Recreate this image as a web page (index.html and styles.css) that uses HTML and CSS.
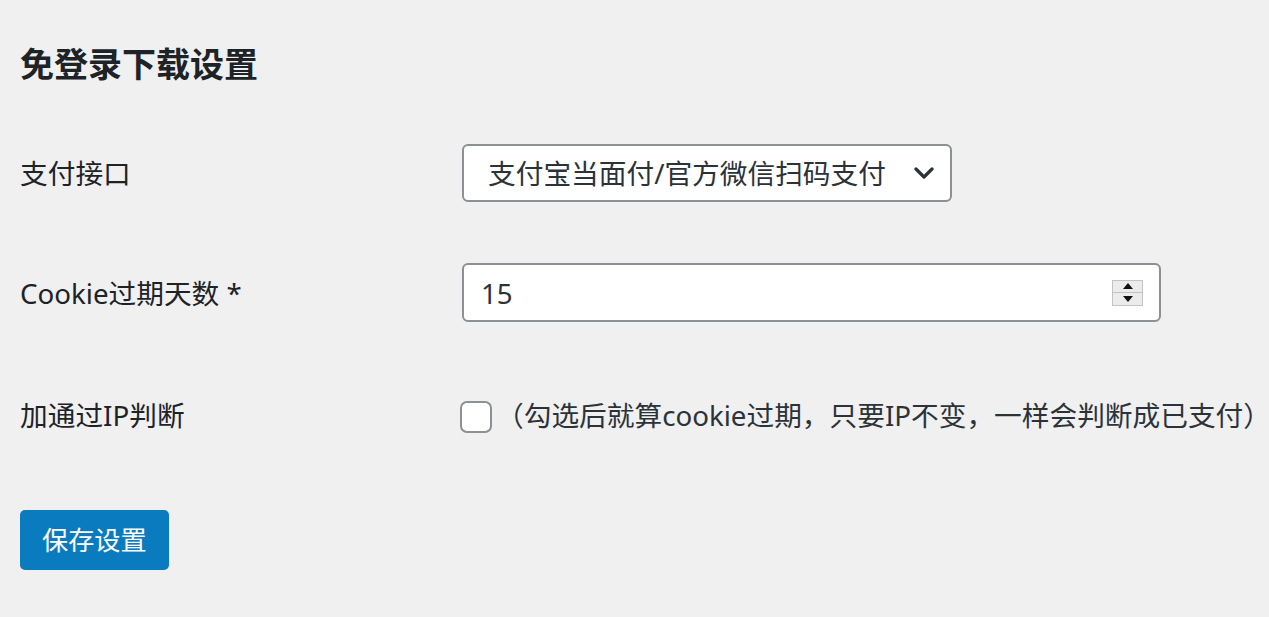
FILE: index.html
```html
<!DOCTYPE html>
<html lang="zh-CN">
<head>
    <meta charset="UTF-8">
    <meta name="viewport" content="width=device-width, initial-scale=1.0">
    <title>免登录下载设置</title>
    <link rel="stylesheet" href="styles.css">
</head>
<body>
    <div class="wrap">
        <h2 class="page-title">免登录下载设置</h2>

        <form id="settingsForm">
            <div class="form-row">
                <label class="row-label" for="payGateway">支付接口</label>
                <div class="row-field">
                    <div class="select-box">
                        <span class="select-value">支付宝当面付/官方微信扫码支付</span>
                        <svg class="chevron" width="20" height="12" viewBox="0 0 20 12">
                            <path d="M2 2 L10 10 L18 2" fill="none" stroke="#2c3338" stroke-width="3.2" stroke-linecap="round" stroke-linejoin="round"/>
                        </svg>
                    </div>
                </div>
            </div>

            <div class="form-row">
                <label class="row-label" for="cookieDays">Cookie过期天数 *</label>
                <div class="row-field">
                    <div class="number-box">
                        <input type="text" id="cookieDays" class="number-input" value="15">
                        <span class="spinner">
                            <span class="spin-btn"><span class="tri-up"></span></span>
                            <span class="spin-btn"><span class="tri-down"></span></span>
                        </span>
                    </div>
                </div>
            </div>

            <div class="form-row">
                <label class="row-label" for="checkIp">加通过IP判断</label>
                <div class="row-field">
                    <label class="check-line">
                        <span class="checkbox" id="checkIp"></span>
                        <span class="check-text">（勾选后就算cookie过期，只要IP不变，一样会判断成已支付）</span>
                    </label>
                </div>
            </div>

            <button type="submit" class="button-primary">保存设置</button>
        </form>
    </div>
</body>
</html>
```

FILE: styles.css
```css
html, body {
    margin: 0;
    background: #f0f0f1;
}
body {
    font-family: "Noto Sans", "Noto Sans CJK SC", sans-serif;
    color: #1d2327;
    overflow: hidden;
}
.wrap {
    padding: 44px 0 0 20px;
}
.page-title {
    margin: 0;
    font-size: 34px;
    line-height: 41px;
    font-weight: 700;
    color: #1d2327;
}
#settingsForm {
    margin-top: 59px;
}
.form-row {
    display: flex;
    align-items: center;
    height: 58px;
    margin-bottom: 61px;
}
.form-row:nth-child(2) {
    height: 59px;
    margin-bottom: 64px;
}
.form-row:nth-child(3) {
    margin-bottom: 66px;
}
.row-label {
    width: 442px;
    flex-shrink: 0;
    font-size: 27.7px;
    line-height: 36px;
}
.row-field {
    display: flex;
    align-items: center;
    white-space: nowrap;
}
.select-box {
    box-sizing: border-box;
    width: 490px;
    height: 58px;
    border: 2px solid #8c8f94;
    border-radius: 6px;
    background: #fff;
    display: flex;
    align-items: center;
    justify-content: space-between;
    padding: 0 16px 0 24px;
    color: #2c3338;
}
.select-value {
    font-size: 27.7px;
    line-height: 36px;
}
.number-box {
    box-sizing: border-box;
    width: 699px;
    height: 59px;
    border: 2px solid #8c8f94;
    border-radius: 6px;
    background: #fff;
    display: flex;
    align-items: center;
    padding: 0 16px 0 17px;
}
.number-input {
    flex: 1;
    border: 0;
    outline: 0;
    padding: 0;
    background: transparent;
    font-family: "Noto Sans", "Noto Sans CJK SC", sans-serif;
    font-size: 27.7px;
    color: #2c3338;
}
.spinner {
    display: flex;
    flex-direction: column;
    width: 31px;
    height: 26px;
    border: 1px solid #c3c3c3;
    box-sizing: border-box;
    background: #ececec;
}
.spin-btn {
    flex: 1;
    display: flex;
    align-items: center;
    justify-content: center;
}
.spin-btn + .spin-btn {
    border-top: 1px solid #c3c3c3;
}
.tri-up {
    width: 0;
    height: 0;
    border-left: 5px solid transparent;
    border-right: 5px solid transparent;
    border-bottom: 6px solid #111;
}
.tri-down {
    width: 0;
    height: 0;
    border-left: 5px solid transparent;
    border-right: 5px solid transparent;
    border-top: 6px solid #111;
}
.check-line {
    display: flex;
    align-items: center;
    margin-left: -2px;
}
.checkbox {
    box-sizing: border-box;
    width: 32px;
    height: 32px;
    border: 2px solid #8c8f94;
    border-radius: 7px;
    background: #fff;
    margin-top: 3px;
    flex-shrink: 0;
}
.check-text {
    font-size: 27.7px;
    line-height: 36px;
    color: #2c3338;
    margin-left: 4px;
}
.button-primary {
    display: block;
    height: 60px;
    padding: 0 22px;
    border: 0;
    border-radius: 5px;
    background: #0a7bbf;
    color: #fff;
    font-family: "Noto Sans", "Noto Sans CJK SC", sans-serif;
    font-size: 26.2px;
    line-height: 36px;
}
```
